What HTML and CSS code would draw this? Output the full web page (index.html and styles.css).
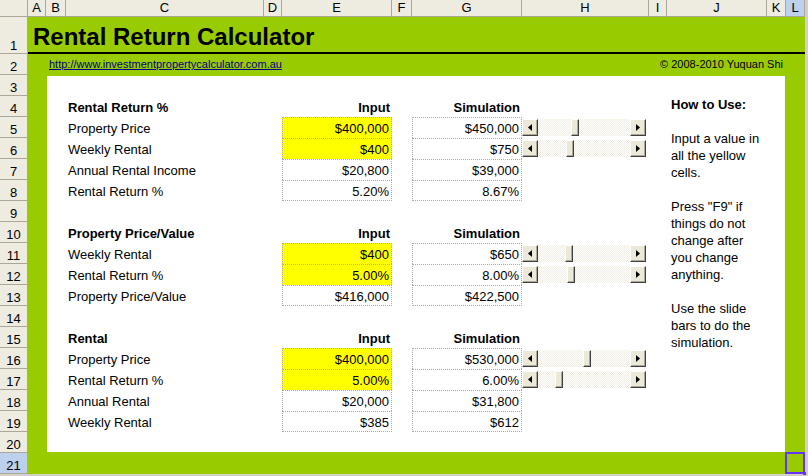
FILE: index.html
```html
<!DOCTYPE html>
<html>
<head>
<meta charset="utf-8">
<title>Rental Return Calculator</title>
<link rel="stylesheet" href="styles.css">
</head>
<body>
<div class="sheet">
  <div class="ch"></div>
  <div class="ch">A</div>
  <div class="ch">B</div>
  <div class="ch">C</div>
  <div class="ch">D</div>
  <div class="ch">E</div>
  <div class="ch">F</div>
  <div class="ch">G</div>
  <div class="ch">H</div>
  <div class="ch">I</div>
  <div class="ch">J</div>
  <div class="ch">K</div>
  <div class="ch hl">L</div>

  <div class="rh r1">1</div>
  <div class="rh r2">2</div>
  <div class="rh r3">3</div>
  <div class="rh r4">4</div>
  <div class="rh r5">5</div>
  <div class="rh r6">6</div>
  <div class="rh r7">7</div>
  <div class="rh r8">8</div>
  <div class="rh r9">9</div>
  <div class="rh r10">10</div>
  <div class="rh r11">11</div>
  <div class="rh r12">12</div>
  <div class="rh r13">13</div>
  <div class="rh r14">14</div>
  <div class="rh r15">15</div>
  <div class="rh r16">16</div>
  <div class="rh r17">17</div>
  <div class="rh r18">18</div>
  <div class="rh r19">19</div>
  <div class="rh r20">20</div>
  <div class="rh r21 hl">21</div>

  <div class="green"></div>
  <div class="white"></div>

  <div class="title">Rental Return Calculator</div>
  <div class="link">http://www.investmentpropertycalculator.com.au</div>
  <div class="copy">© 2008-2010 Yuquan Shi</div>

  <!-- Section 1 -->
  <div class="cell b cC r4">Rental Return %</div>
  <div class="cell b num cE r4">Input</div>
  <div class="cell b num cG r4">Simulation</div>

  <div class="cell cC r5">Property Price</div>
  <div class="cell num box yel cE r5">$400,000</div>
  <div class="cell num box cG r5">$450,000</div>
  <div class="sb cH r5"><span class="btn"><svg width="4" height="7" viewBox="0 0 4 7"><polygon points="4,0 0,3.5 4,7"/></svg></span><span class="track"><span class="thumb" style="--pos:33px"></span></span><span class="btn"><svg width="4" height="7" viewBox="0 0 4 7"><polygon points="0,0 4,3.5 0,7"/></svg></span></div>

  <div class="cell cC r6">Weekly Rental</div>
  <div class="cell num box yel cE r6">$400</div>
  <div class="cell num box cG r6">$750</div>
  <div class="sb cH r6"><span class="btn"><svg width="4" height="7" viewBox="0 0 4 7"><polygon points="4,0 0,3.5 4,7"/></svg></span><span class="track"><span class="thumb" style="--pos:28px"></span></span><span class="btn"><svg width="4" height="7" viewBox="0 0 4 7"><polygon points="0,0 4,3.5 0,7"/></svg></span></div>

  <div class="cell cC r7">Annual Rental Income</div>
  <div class="cell num box cE r7">$20,800</div>
  <div class="cell num box cG r7">$39,000</div>

  <div class="cell cC r8">Rental Return %</div>
  <div class="cell num box last cE r8">5.20%</div>
  <div class="cell num box last cG r8">8.67%</div>

  <!-- Section 2 -->
  <div class="cell b cC r10">Property Price/Value</div>
  <div class="cell b num cE r10">Input</div>
  <div class="cell b num cG r10">Simulation</div>

  <div class="cell cC r11">Weekly Rental</div>
  <div class="cell num box yel cE r11">$400</div>
  <div class="cell num box cG r11">$650</div>
  <div class="sb cH r11"><span class="btn"><svg width="4" height="7" viewBox="0 0 4 7"><polygon points="4,0 0,3.5 4,7"/></svg></span><span class="track"><span class="thumb" style="--pos:27px"></span></span><span class="btn"><svg width="4" height="7" viewBox="0 0 4 7"><polygon points="0,0 4,3.5 0,7"/></svg></span></div>

  <div class="cell cC r12">Rental Return %</div>
  <div class="cell num box yel cE r12">5.00%</div>
  <div class="cell num box cG r12">8.00%</div>
  <div class="sb cH r12"><span class="btn"><svg width="4" height="7" viewBox="0 0 4 7"><polygon points="4,0 0,3.5 4,7"/></svg></span><span class="track"><span class="thumb" style="--pos:29px"></span></span><span class="btn"><svg width="4" height="7" viewBox="0 0 4 7"><polygon points="0,0 4,3.5 0,7"/></svg></span></div>

  <div class="cell cC r13">Property Price/Value</div>
  <div class="cell num box last cE r13">$416,000</div>
  <div class="cell num box last cG r13">$422,500</div>

  <!-- Section 3 -->
  <div class="cell b cC r15">Rental</div>
  <div class="cell b num cE r15">Input</div>
  <div class="cell b num cG r15">Simulation</div>

  <div class="cell cC r16">Property Price</div>
  <div class="cell num box yel cE r16">$400,000</div>
  <div class="cell num box cG r16">$530,000</div>
  <div class="sb cH r16"><span class="btn"><svg width="4" height="7" viewBox="0 0 4 7"><polygon points="4,0 0,3.5 4,7"/></svg></span><span class="track"><span class="thumb" style="--pos:45px"></span></span><span class="btn"><svg width="4" height="7" viewBox="0 0 4 7"><polygon points="0,0 4,3.5 0,7"/></svg></span></div>

  <div class="cell cC r17">Rental Return %</div>
  <div class="cell num box yel cE r17">5.00%</div>
  <div class="cell num box cG r17">6.00%</div>
  <div class="sb cH r17"><span class="btn"><svg width="4" height="7" viewBox="0 0 4 7"><polygon points="4,0 0,3.5 4,7"/></svg></span><span class="track"><span class="thumb" style="--pos:17px"></span></span><span class="btn"><svg width="4" height="7" viewBox="0 0 4 7"><polygon points="0,0 4,3.5 0,7"/></svg></span></div>

  <div class="cell cC r18">Annual Rental</div>
  <div class="cell num box cE r18">$20,000</div>
  <div class="cell num box cG r18">$31,800</div>

  <div class="cell cC r19">Weekly Rental</div>
  <div class="cell num box last cE r19">$385</div>
  <div class="cell num box last cG r19">$612</div>

  <div class="howto">
    <span class="b">How to Use:</span><br><br>
    Input a value in<br>all the yellow<br>cells.<br><br>
    Press "F9" if<br>things do not<br>change after<br>you change<br>anything.<br><br>
    Use the slide<br>bars to do the<br>simulation.
  </div>

  <div class="sel"></div>
</div>
</body>
</html>
```

FILE: styles.css
```css
* { box-sizing: border-box; }

html, body {
  margin: 0;
  padding: 0;
}

body {
  width: 808px;
  height: 476px;
  overflow: hidden;
  background: #d4d0c8;
  font-family: "Liberation Sans", Arial, sans-serif;
  color: #000;
}

.sheet {
  display: grid;
  grid-template-columns: 28px 18px 20px 198px 18px 110px 20px 110px 127px 18px 100px 19px 19px 1fr;
  grid-template-rows: 17px 37px repeat(20, 21px) 1fr;
  width: 808px;
  height: 476px;
}

/* headers */
.ch {
  grid-row: 1;
  background: #eeece1;
  border-right: 1px solid #aca899;
  border-bottom: 1px solid #aca899;
  font-size: 13px;
  line-height: 16px;
  text-align: center;
}

.rh {
  grid-column: 1;
  display: flex;
  align-items: flex-end;
  justify-content: center;
  background: #eeece1;
  border-right: 1px solid #aca899;
  border-bottom: 1px solid #aca899;
  font-size: 13px;
  line-height: 15px;
}

.hl {
  background: #bdd0ee;
}

/* rows */
.r1 { grid-row: 2; }
.r2 { grid-row: 3; }
.r3 { grid-row: 4; }
.r4 { grid-row: 5; }
.r5 { grid-row: 6; }
.r6 { grid-row: 7; }
.r7 { grid-row: 8; }
.r8 { grid-row: 9; }
.r9 { grid-row: 10; }
.r10 { grid-row: 11; }
.r11 { grid-row: 12; }
.r12 { grid-row: 13; }
.r13 { grid-row: 14; }
.r14 { grid-row: 15; }
.r15 { grid-row: 16; }
.r16 { grid-row: 17; }
.r17 { grid-row: 18; }
.r18 { grid-row: 19; }
.r19 { grid-row: 20; }
.r20 { grid-row: 21; }
.r21 { grid-row: 22; }

/* columns */
.cC { grid-column: 4; }
.cE { grid-column: 6; }
.cG { grid-column: 8; }
.cH { grid-column: 9; }

/* backgrounds */
.green {
  grid-column: 2 / 14;
  grid-row: 2 / 23;
  background: #99cc00;
}

.white {
  grid-column: 3 / 13;
  grid-row: 4 / 22;
  margin: 1px 1px 1px 1px;
  background: #fff;
}

/* title area */
.title {
  grid-column: 2 / 14;
  grid-row: 2;
  display: flex;
  align-items: flex-end;
  padding: 0 0 1px 5px;
  border-bottom: 2px solid #000;
  font-size: 24px;
  font-weight: bold;
  line-height: 28px;
  white-space: nowrap;
}

.link {
  grid-column: 3 / 9;
  grid-row: 3;
  display: flex;
  align-items: center;
  padding-left: 3px;
  font-size: 11px;
  line-height: 13px;
  color: #000080;
  text-decoration: underline;
  white-space: nowrap;
}

.copy {
  grid-column: 8 / 13;
  grid-row: 3;
  display: flex;
  align-items: center;
  justify-content: flex-end;
  padding-right: 3px;
  font-size: 11px;
  line-height: 13px;
  white-space: nowrap;
}

/* cells */
.cell {
  display: flex;
  align-items: flex-end;
  padding: 0 2px 2px;
  font-size: 13px;
  line-height: 15px;
  white-space: nowrap;
}

.b { font-weight: bold; }

.num { justify-content: flex-end; }

.box {
  border-top: 1px dotted #a9a9b4;
  border-left: 1px dotted #a9a9b4;
  border-right: 1px dotted #a9a9b4;
}

.box.last {
  border-bottom: 1px dotted #a9a9b4;
  padding-bottom: 1px;
}

.yel { background: #ffff00; }

/* scroll bars */
.sb {
  display: flex;
  align-self: start;
  width: 124px;
  height: 17px;
  margin-top: 2px;
}

.btn {
  display: flex;
  align-items: center;
  justify-content: center;
  flex: 0 0 16px;
  height: 17px;
  background: #ece9d8;
  border: 1px solid;
  border-color: #fff #404040 #404040 #fff;
  box-shadow: inset -1px -1px 0 #aca899;
}

.btn svg { display: block; fill: #000; }

.track {
  flex: 1;
  height: 17px;
  background: repeating-conic-gradient(#ffffff 0 25%, #f0eee2 0 50%) 0 0 / 2px 2px;
}

.thumb {
  display: block;
  width: 8px;
  height: 17px;
  margin-left: var(--pos);
  background: #ece9d8;
  border: 1px solid;
  border-color: #fff #404040 #404040 #fff;
  box-shadow: inset -1px -1px 0 #aca899;
}

/* help text */
.howto {
  grid-column: 11 / 13;
  grid-row: 5 / 21;
  align-self: start;
  padding-left: 4px;
  font-size: 13px;
  line-height: 17px;
  white-space: nowrap;
}

/* selection */
.sel {
  grid-column: 13;
  grid-row: 22;
  position: relative;
  margin: -1px 0 0 -1px;
  border: 2px solid #6633ff;
}

.sel::after {
  content: "";
  position: absolute;
  right: -3px;
  bottom: -3px;
  width: 3px;
  height: 3px;
  background: #6633ff;
}
```
